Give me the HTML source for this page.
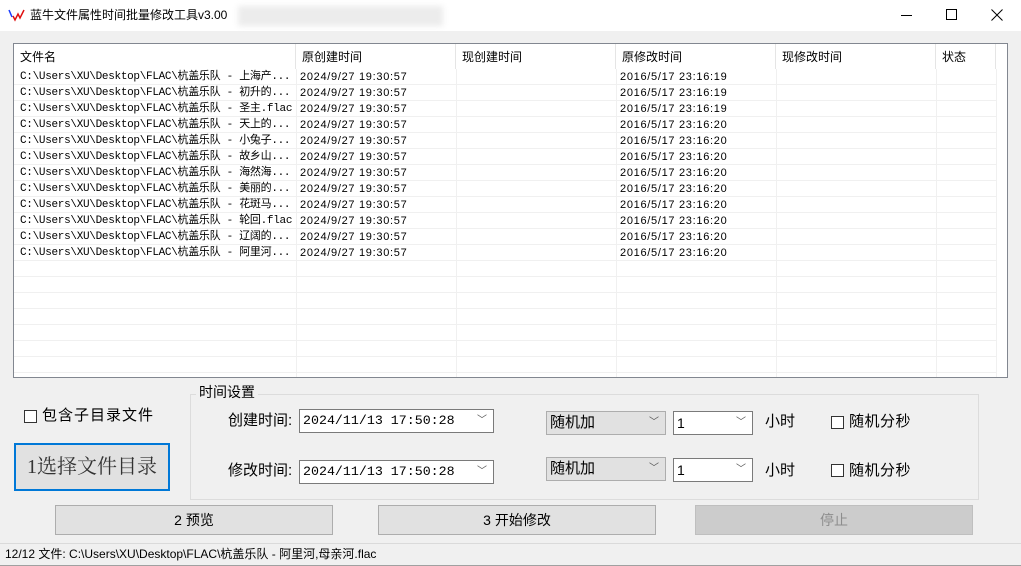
<!DOCTYPE html>
<html><head><meta charset="utf-8"><style>
*{margin:0;padding:0;box-sizing:border-box}
body{width:1021px;height:566px;background:#f0f0f0;position:relative;overflow:hidden;font-family:"Liberation Sans","Noto Sans CJK SC",sans-serif;color:#000}
.a{position:absolute}
.title{left:0;top:0;width:1021px;height:31px;background:#fff;font-size:12px}
.list{left:13px;top:43px;width:995px;height:335px;background:#fff;border:1px solid #828790;overflow:hidden}
.hd{position:absolute;top:0;height:25px;font-size:12px;line-height:26px;padding-left:6px;border-right:1px solid #e5e5e5}
.body{position:absolute;left:0;top:25px;width:982px;height:310px;background:repeating-linear-gradient(to bottom,#fff 0,#fff 15px,#f0f0f0 15px,#f0f0f0 16px)}
.vl{position:absolute;top:25px;width:1px;height:310px;background:#f0f0f0}
.r{position:absolute;left:0;height:16px;font-size:11px;line-height:16px;white-space:nowrap}
.r span{position:absolute;top:0;letter-spacing:0.7px}
.r span.fn{font-family:"Liberation Mono","Noto Sans CJK SC",monospace;letter-spacing:-0.3px;left:6px}
.btn{background:#e1e1e1;border:1px solid #adadad;font-size:14px;text-align:center}
.cb{width:13px;height:13px;border:1px solid #333;background:#fff}
.sel{border:1px solid #7a7a7a;background:#fff;font-size:14px;line-height:22px;padding-left:3px}
.dt{font-family:"Liberation Mono",monospace;font-size:13.3px}
.arr{position:absolute;right:6px;top:0;font-size:10px;color:#555;font-family:"Liberation Sans","Noto Sans CJK SC",sans-serif}
</style></head><body>
<div class="a title">
 <svg class="a" style="left:8px;top:8px" width="17" height="14" viewBox="0 0 17 14"><path d="M1 2 L4 9" stroke="#1a3cff" stroke-width="1.5" fill="none"/><path d="M5 8 L7 12 L10 6 L12 10 L16 2" stroke="#e01010" stroke-width="1.5" fill="none"/></svg>
 <div class="a" style="left:30px;top:8px;font-size:12px;line-height:15px">蓝牛文件属性时间批量修改工具v3.00</div>
 <div class="a" style="left:238px;top:6px;width:205px;height:20px;background:#ececec;filter:blur(3px)"></div>
 <div class="a" style="left:901px;top:15px;width:11px;height:1px;background:#000"></div>
 <div class="a" style="left:946px;top:9px;width:11px;height:11px;border:1px solid #000"></div>
 <svg class="a" style="left:991px;top:9px" width="12" height="12"><path d="M0.5 0.5L11.5 11.5M11.5 0.5L0.5 11.5" stroke="#000" stroke-width="1"/></svg>
</div>
<div class="a list">
 <div class="hd" style="left:0;width:282px">文件名</div>
 <div class="hd" style="left:282px;width:160px">原创建时间</div>
 <div class="hd" style="left:442px;width:160px">现创建时间</div>
 <div class="hd" style="left:602px;width:160px">原修改时间</div>
 <div class="hd" style="left:762px;width:160px">现修改时间</div>
 <div class="hd" style="left:922px;width:60px">状态</div>
 <div class="body"></div>
 <div class="vl" style="left:282px"></div><div class="vl" style="left:442px"></div><div class="vl" style="left:602px"></div><div class="vl" style="left:762px"></div><div class="vl" style="left:922px"></div><div class="vl" style="left:982px"></div>
 <div id="rows"></div>
</div>
<div class="a" style="left:190px;top:394px;width:789px;height:106px;border:1px solid #dcdcdc"></div>
<div class="a" style="left:196px;top:383px;font-size:14px;background:#f0f0f0;padding:0 3px;line-height:18px">时间设置</div>
<div class="a cb" style="left:24px;top:410px"></div>
<div class="a" style="left:42px;top:406px;font-size:15px;line-height:20px;letter-spacing:1px">包含子目录文件</div>
<div class="a btn" style="left:14px;top:443px;width:156px;height:48px;border:2px solid #0078d7;font-family:'Liberation Serif','Noto Serif CJK SC',serif;font-size:20px;line-height:44px;color:#333">1选择文件目录</div>
<div class="a" style="left:228px;top:411px;font-size:15px;line-height:20px">创建时间:</div>
<div class="a" style="left:228px;top:461px;font-size:15px;line-height:20px">修改时间:</div>
<div class="a sel dt" style="left:299px;top:409px;width:195px;height:24px">2024/11/13 17:50:28<span class="arr">﹀</span></div>
<div class="a sel dt" style="left:299px;top:460px;width:195px;height:24px">2024/11/13 17:50:28<span class="arr">﹀</span></div>
<div class="a sel" style="left:546px;top:411px;width:120px;height:24px;background:#e1e1e1;border-color:#adadad;font-size:15px">随机加<span class="arr">﹀</span></div>
<div class="a sel" style="left:546px;top:457px;width:120px;height:24px;background:#e1e1e1;border-color:#adadad;font-size:15px">随机加<span class="arr">﹀</span></div>
<div class="a sel" style="left:673px;top:411px;width:80px;height:24px">1<span class="arr">﹀</span></div>
<div class="a sel" style="left:673px;top:458px;width:80px;height:24px">1<span class="arr">﹀</span></div>
<div class="a" style="left:765px;top:412px;font-size:15px;line-height:20px">小时</div>
<div class="a" style="left:765px;top:461px;font-size:15px;line-height:20px">小时</div>
<div class="a cb" style="left:831px;top:416px"></div>
<div class="a" style="left:849px;top:412px;font-size:15px;line-height:20px;letter-spacing:0.5px">随机分秒</div>
<div class="a cb" style="left:831px;top:464px"></div>
<div class="a" style="left:849px;top:461px;font-size:15px;line-height:20px;letter-spacing:0.5px">随机分秒</div>
<div class="a btn" style="left:55px;top:505px;width:278px;height:30px;line-height:28px">2 预览</div>
<div class="a btn" style="left:378px;top:505px;width:278px;height:30px;line-height:28px">3 开始修改</div>
<div class="a btn" style="left:695px;top:505px;width:278px;height:30px;line-height:28px;background:#cccccc;border-color:#bfbfbf;color:#8d8d8d">停止</div>
<div class="a" style="left:0;top:543px;width:1021px;height:1px;background:#dadada"></div>
<div class="a" style="left:5px;top:546px;font-size:12px;line-height:16px">12/12 文件: C:\Users\XU\Desktop\FLAC\杭盖乐队 - 阿里河,母亲河.flac</div>
<div class="a" style="left:0;top:565px;width:1021px;height:1px;background:#a0a0a0"></div>
<script>
var n=["上海产...","初升的...","圣主.flac","天上的...","小兔子...","故乡山...","海然海...","美丽的...","花斑马...","轮回.flac","辽阔的...","阿里河..."];
var t=["23:16:19","23:16:19","23:16:19","23:16:20","23:16:20","23:16:20","23:16:20","23:16:20","23:16:20","23:16:20","23:16:20","23:16:20"];
var h="";
for(var i=0;i<12;i++){h+='<div class="r" style="top:'+(25+16*i)+'px;width:982px"><span class="fn">C:\\Users\\XU\\Desktop\\FLAC\\杭盖乐队 - '+n[i]+'</span><span style="left:286px">2024/9/27 19:30:57</span><span style="left:606px">2016/5/17 '+t[i]+'</span></div>';}
document.getElementById("rows").innerHTML=h;
</script>
</body></html>
